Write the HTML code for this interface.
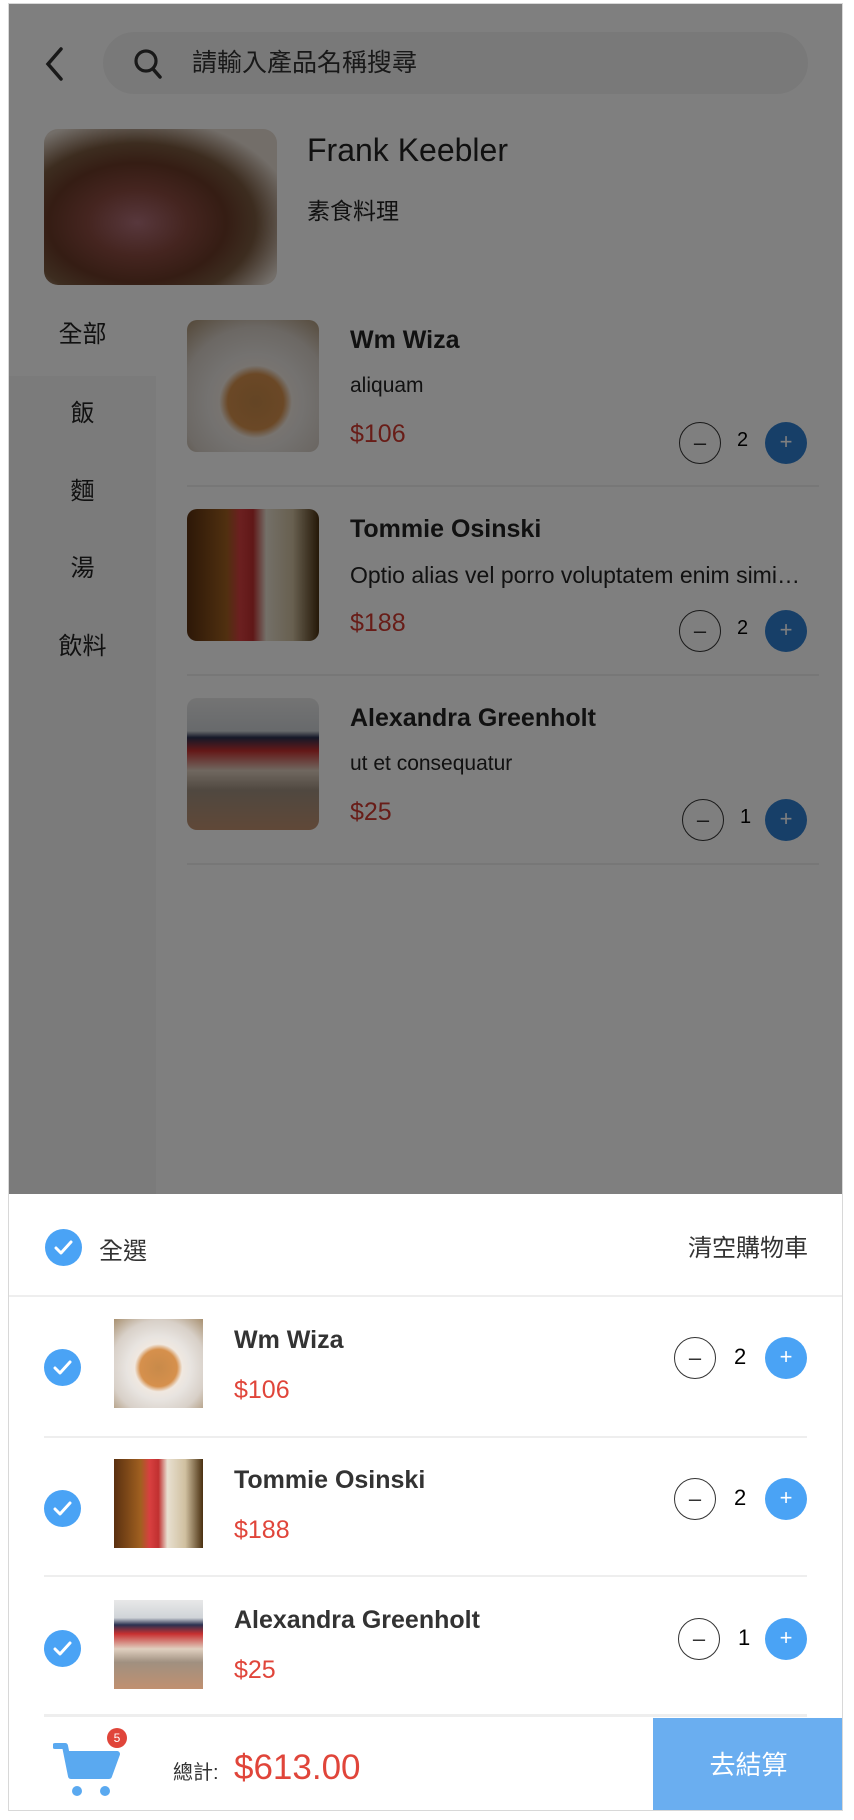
<!DOCTYPE html>
<html><head><meta charset="utf-8">
<style>
*{margin:0;padding:0;box-sizing:border-box}
body{width:854px;height:1820px;background:#fff;font-family:"Liberation Sans","Noto Sans CJK TC",sans-serif;position:relative;overflow:hidden;color:#333}
#frame{position:absolute;left:8px;top:3px;width:835px;height:1808px;border:1px solid #d8d8d8;background:#fff;overflow:hidden}
.a{position:absolute}
.ov{position:absolute;left:0;top:0;width:835px;height:1190px;background:rgba(0,0,0,.5)}
.circ{position:absolute;border-radius:50%;width:42px;height:42px;text-align:center;line-height:40px;font-size:22px}
.minus{border:1.5px solid #333;color:#333}
.plus{background:#4aa3f5;color:#fff}
.chk{position:absolute;width:37px;height:37px;border-radius:50%;background:#4aa3f5}
.chk svg{position:absolute;left:9px;top:10px}
.hr{position:absolute;height:2px;background:#eee}
</style></head><body>
<div id="frame">
<svg class="a" style="left:34px;top:42px" width="24" height="36" viewBox="0 0 24 36"><path d="M18 3 L5 18 L18 33" fill="none" stroke="#333" stroke-width="3.5" stroke-linecap="round"/></svg>
<div class="a" style="left:94px;top:28px;width:705px;height:62px;border-radius:31px;background:#f3f3f3"></div>
<svg class="a" style="left:122px;top:42px" width="36" height="36" viewBox="0 0 36 36"><circle cx="15" cy="15" r="10" fill="none" stroke="#333" stroke-width="3.2"/><path d="M22 23 L29 31" stroke="#333" stroke-width="3.5" stroke-linecap="round"/></svg>
<div class="a" style="left:183px;top:39px;font-size:25px;color:#333">請輸入產品名稱搜尋</div>
<div class="a" style="left:35px;top:125px;width:233px;height:156px;border-radius:14px;background:radial-gradient(ellipse at 40% 60%,#b0707a 0,#8a4a40 25%,#6a3a28 45%,#7a5a40 60%,#e6dcd2 80%)"></div>
<div class="a" style="left:298px;top:128px;font-size:32px;color:#222">Frank Keebler</div>
<div class="a" style="left:298px;top:188px;font-size:23px;color:#222">素食料理</div>
<div class="a" style="left:0;top:372px;width:147px;height:818px;background:#f7f7f7"></div>
<div class="a" style="left:0;top:310px;width:147px;text-align:center;font-size:24px;color:#222">全部</div>
<div class="a" style="left:0;top:389px;width:147px;text-align:center;font-size:24px;color:#222">飯</div>
<div class="a" style="left:0;top:467px;width:147px;text-align:center;font-size:24px;color:#222">麵</div>
<div class="a" style="left:0;top:544px;width:147px;text-align:center;font-size:24px;color:#222">湯</div>
<div class="a" style="left:0;top:622px;width:147px;text-align:center;font-size:24px;color:#222">飲料</div>

<div class="a" style="left:178px;top:316px;width:132px;height:132px;border-radius:10px;background:radial-gradient(circle at 52% 62%,#c88a4a 0,#d6904c 26%,#f0e8e0 34%,#e8e4e0 45%,#d8d0c8 70%,#a89070 100%)"></div>
<div class="a" style="left:341px;top:322px;font-size:25px;font-weight:bold;color:#222">Wm Wiza</div>
<div class="a" style="left:341px;top:370px;font-size:21px;color:#222">aliquam</div>
<div class="a" style="left:341px;top:416px;font-size:25px;color:#d03a30">$106</div>
<div class="circ minus" style="left:670px;top:418px">–</div>
<div class="a" style="left:728px;top:425px;font-size:20px;color:#000">2</div>
<div class="circ plus" style="left:756px;top:418px;background:#2f7fd0">+</div>
<div class="hr" style="left:178px;top:481px;width:632px"></div>

<div class="a" style="left:178px;top:505px;width:132px;height:132px;border-radius:10px;background:linear-gradient(90deg,#5a3010 0,#a06020 30%,#d84040 40%,#c03030 50%,#e8e0d0 60%,#d0c0a0 80%,#4a3010 100%)"></div>
<div class="a" style="left:341px;top:511px;font-size:25px;font-weight:bold;color:#222">Tommie Osinski</div>
<div class="a" style="left:341px;top:558px;font-size:23px;color:#222;width:455px;white-space:nowrap;overflow:hidden;text-overflow:ellipsis">Optio alias vel porro voluptatem enim similique</div>
<div class="a" style="left:341px;top:605px;font-size:25px;color:#d03a30">$188</div>
<div class="circ minus" style="left:670px;top:606px">–</div>
<div class="a" style="left:728px;top:613px;font-size:20px;color:#000">2</div>
<div class="circ plus" style="left:756px;top:606px;background:#2f7fd0">+</div>
<div class="hr" style="left:178px;top:670px;width:632px"></div>

<div class="a" style="left:178px;top:694px;width:132px;height:132px;border-radius:10px;background:linear-gradient(180deg,#e8e8e8 0,#d0d4d8 25%,#2a3050 30%,#c83030 40%,#e0d0c0 55%,#a09080 70%,#c09070 100%)"></div>
<div class="a" style="left:341px;top:700px;font-size:25px;font-weight:bold;color:#222">Alexandra Greenholt</div>
<div class="a" style="left:341px;top:748px;font-size:21px;color:#222">ut et consequatur</div>
<div class="a" style="left:341px;top:794px;font-size:25px;color:#d03a30">$25</div>
<div class="circ minus" style="left:673px;top:795px">–</div>
<div class="a" style="left:731px;top:802px;font-size:20px;color:#000">1</div>
<div class="circ plus" style="left:756px;top:795px;background:#2f7fd0">+</div>
<div class="hr" style="left:178px;top:859px;width:632px"></div>

<div class="ov"></div>

<div class="chk" style="left:36px;top:1225px"><svg width="19" height="17" viewBox="0 0 19 17"><path d="M2 9 L7 14 L17 3" fill="none" stroke="#fff" stroke-width="3" stroke-linecap="round" stroke-linejoin="round"/></svg></div>
<div class="a" style="left:90px;top:1227px;font-size:24px;color:#333">全選</div>
<div class="a" style="right:34px;top:1224px;font-size:24px;color:#333">清空購物車</div>
<div class="hr" style="left:0;top:1291px;width:835px"></div>

<div class="chk" style="left:35px;top:1345px"><svg width="19" height="17" viewBox="0 0 19 17"><path d="M2 9 L7 14 L17 3" fill="none" stroke="#fff" stroke-width="3" stroke-linecap="round" stroke-linejoin="round"/></svg></div>
<div class="a" style="left:105px;top:1315px;width:89px;height:89px;background:radial-gradient(circle at 50% 55%,#c88a4a 0,#d6904c 28%,#f0e8e0 36%,#e8e4e0 48%,#d8d0c8 72%,#a89070 100%)"></div>
<div class="a" style="left:225px;top:1322px;font-size:25px;font-weight:bold;color:#333">Wm Wiza</div>
<div class="a" style="left:225px;top:1372px;font-size:25px;color:#e0453a">$106</div>
<div class="circ minus" style="left:665px;top:1333px">–</div>
<div class="a" style="left:725px;top:1340px;font-size:22px;color:#000">2</div>
<div class="circ plus" style="left:756px;top:1333px">+</div>
<div class="hr" style="left:35px;top:1432px;width:763px"></div>

<div class="chk" style="left:35px;top:1486px"><svg width="19" height="17" viewBox="0 0 19 17"><path d="M2 9 L7 14 L17 3" fill="none" stroke="#fff" stroke-width="3" stroke-linecap="round" stroke-linejoin="round"/></svg></div>
<div class="a" style="left:105px;top:1455px;width:89px;height:89px;background:linear-gradient(90deg,#5a3010 0,#a06020 30%,#d84040 40%,#c03030 50%,#e8e0d0 60%,#d0c0a0 80%,#4a3010 100%)"></div>
<div class="a" style="left:225px;top:1462px;font-size:25px;font-weight:bold;color:#333">Tommie Osinski</div>
<div class="a" style="left:225px;top:1512px;font-size:25px;color:#e0453a">$188</div>
<div class="circ minus" style="left:665px;top:1474px">–</div>
<div class="a" style="left:725px;top:1481px;font-size:22px;color:#000">2</div>
<div class="circ plus" style="left:756px;top:1474px">+</div>
<div class="hr" style="left:35px;top:1571px;width:763px"></div>

<div class="chk" style="left:35px;top:1626px"><svg width="19" height="17" viewBox="0 0 19 17"><path d="M2 9 L7 14 L17 3" fill="none" stroke="#fff" stroke-width="3" stroke-linecap="round" stroke-linejoin="round"/></svg></div>
<div class="a" style="left:105px;top:1596px;width:89px;height:89px;background:linear-gradient(180deg,#e8e8e8 0,#d0d4d8 20%,#2a3050 28%,#c83030 38%,#e0d0c0 55%,#a09080 70%,#c09070 100%)"></div>
<div class="a" style="left:225px;top:1602px;font-size:25px;font-weight:bold;color:#333">Alexandra Greenholt</div>
<div class="a" style="left:225px;top:1652px;font-size:25px;color:#e0453a">$25</div>
<div class="circ minus" style="left:669px;top:1614px">–</div>
<div class="a" style="left:729px;top:1621px;font-size:22px;color:#000">1</div>
<div class="circ plus" style="left:756px;top:1614px">+</div>
<div class="hr" style="left:35px;top:1710px;width:763px;height:3px"></div>

<div class="a" style="left:0;top:1713px;width:835px;height:95px;background:#fff"></div>
<svg class="a" style="left:44px;top:1738px" width="70" height="56" viewBox="0 0 70 56"><path d="M2 4 H12 L18 34 H56 L64 12 H14" fill="none" stroke="#5aa9f0" stroke-width="6" stroke-linejoin="round" stroke-linecap="round"/><path d="M15 14 H63 L56 33 H19 Z" fill="#5aa9f0"/><circle cx="24" cy="49" r="5" fill="#5aa9f0"/><circle cx="52" cy="49" r="5" fill="#5aa9f0"/></svg>
<div class="a" style="left:98px;top:1724px;width:20px;height:20px;border-radius:50%;background:#e0453a;color:#fff;font-size:12px;text-align:center;line-height:20px">5</div>
<div class="a" style="left:164px;top:1752px;font-size:20px;color:#333">總計:</div>
<div class="a" style="left:225px;top:1744px;font-size:35px;color:#e0453a">$613.00</div>
<div class="a" style="left:644px;top:1714px;width:191px;height:94px;background:#6aaef0;color:#fff;font-size:26px;text-align:center;line-height:94px">去結算</div>
</div>
</body></html>
